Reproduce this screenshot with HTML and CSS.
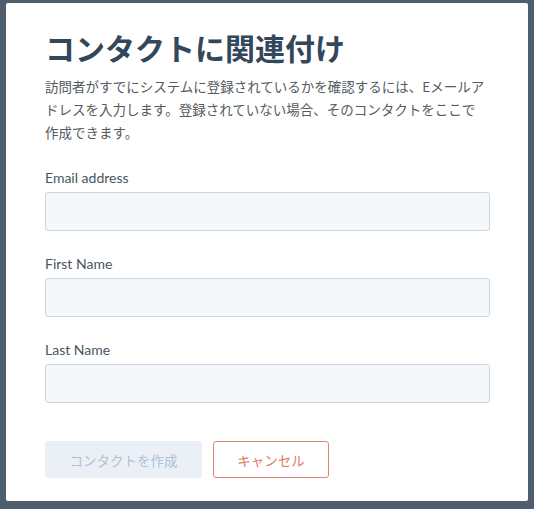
FILE: index.html
```html
<!DOCTYPE html>
<html lang="ja">
<head>
<meta charset="utf-8">
<title>コンタクトに関連付け</title>
<link rel="stylesheet" href="styles.css">
</head>
<body>
<div class="card">
  <h1 class="title">コンタクトに関連付け</h1>
  <p class="desc">訪問者がすでにシステムに登録されているかを確認するには、Eメールア<br>ドレスを入力します。登録されていない場合、そのコンタクトをここで<br>作成できます。</p>
  <div class="field">
    <label class="label">Email address</label>
    <div class="input"></div>
  </div>
  <div class="field">
    <label class="label">First Name</label>
    <div class="input"></div>
  </div>
  <div class="field">
    <label class="label">Last Name</label>
    <div class="input"></div>
  </div>
  <div class="actions">
    <button class="btn btn-primary">コンタクトを作成</button>
    <button class="btn btn-secondary">キャンセル</button>
  </div>
</div>
</body>
</html>
```
FILE: styles.css
```css
html, body {
  margin: 0;
  padding: 0;
}
body {
  background: #4f5e6d;
  padding: 3px 6px 8px 6px;
  font-family: "Lato", "Noto Sans CJK JP", sans-serif;
  height: 509px;
  box-sizing: border-box;
}
.card {
  background: #ffffff;
  width: 522px;
  height: 498px;
  box-sizing: border-box;
  padding: 24px 38px 23px 39px;
  border-radius: 2px;
}
.title {
  margin: 0;
  font-family: "Noto Sans CJK JP", sans-serif;
  font-size: 30px;
  line-height: 40px;
  font-weight: 700;
  color: #33475b;
}
.desc {
  margin: 8px 0 0 0;
  font-family: "Noto Sans CJK JP", sans-serif;
  font-size: 13.5px;
  line-height: 23px;
  color: #555b61;
}
.field {
  display: flex;
  flex-direction: column;
  margin-top: 23px;
}
.field:first-of-type {
  margin-top: 24px;
}
.label {
  font-size: 14px;
  line-height: 20px;
  color: #4a5560;
  margin-bottom: 4px;
}
.input {
  height: 39px;
  box-sizing: border-box;
  background: #f5f8fa;
  border: 1px solid #cbd6e2;
  border-radius: 3px;
}
.actions {
  display: flex;
  gap: 11px;
  margin-top: 38px;
}
.btn {
  height: 37px;
  box-sizing: border-box;
  padding: 0;
  white-space: nowrap;
  font-family: "Noto Sans CJK JP", sans-serif;
  font-size: 13.5px;
  border-radius: 3px;
  cursor: pointer;
}
.btn-primary {
  background: #eaf0f6;
  border: 1px solid #eaf0f6;
  color: #b0c1d4;
  width: 157px;
}
.btn-secondary {
  background: #ffffff;
  border: 1px solid #e1866e;
  color: #e07a5f;
  width: 116px;
}
```
